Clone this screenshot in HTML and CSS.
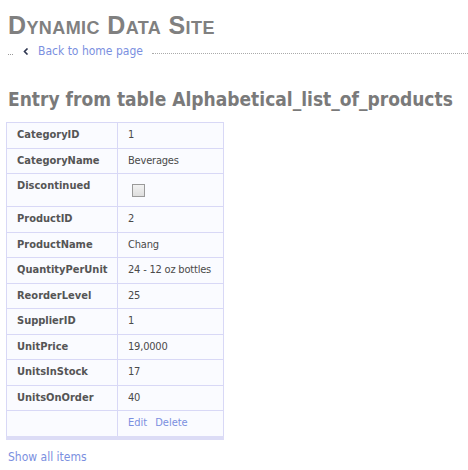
FILE: index.html
```html
<!DOCTYPE html>
<html>
<head>
<meta charset="utf-8">
<link rel="stylesheet" href="styles.css">
</head>
<body>
<div class="page">
  <div class="site-title">Dynamic Data Site</div>
  <div class="crumbs">
    <span class="dots-short"></span>
    <svg class="chev" width="6" height="7" viewBox="0 0 6 7"><path d="M4.5 0.5 L1.5 3.5 L4.5 6.5" fill="none" stroke="#2e3650" stroke-width="1.6"/></svg>
    <a class="link back" href="#">Back to home page</a>
    <span class="dots-long"></span>
  </div>
  <h2 class="entry-title">Entry from table Alphabetical_list_of_products</h2>
  <table class="detail">
    <colgroup><col class="c1"><col class="c2"></colgroup>
    <tr><th>CategoryID</th><td>1</td></tr>
    <tr><th>CategoryName</th><td>Beverages</td></tr>
    <tr><th>Discontinued</th><td><span class="check"></span></td></tr>
    <tr><th>ProductID</th><td>2</td></tr>
    <tr><th>ProductName</th><td>Chang</td></tr>
    <tr><th>QuantityPerUnit</th><td>24 - 12 oz bottles</td></tr>
    <tr><th>ReorderLevel</th><td>25</td></tr>
    <tr><th>SupplierID</th><td>1</td></tr>
    <tr><th>UnitPrice</th><td>19,0000</td></tr>
    <tr><th>UnitsInStock</th><td>17</td></tr>
    <tr><th>UnitsOnOrder</th><td>40</td></tr>
    <tr class="actions"><th></th><td><a class="link" href="#">Edit</a><a class="link del" href="#">Delete</a></td></tr>
  </table>
  <a class="link showall" href="#">Show all items</a>
</div>
</body>
</html>
```
FILE: styles.css
```css
html, body { margin: 0; padding: 0; background: #fff; }
body {
  font-family: "DejaVu Sans Condensed", "Liberation Sans", sans-serif;
  font-size: 11px;
  color: #444;
}
.page { padding: 0 0 0 8px; }
.site-title {
  font-family: "Liberation Sans", sans-serif;
  font-variant: small-caps;
  font-weight: bold;
  font-size: 25px;
  color: #808080;
  line-height: 28px;
  padding-top: 11px;
  letter-spacing: 0.4px;
}
.crumbs {
  display: flex;
  align-items: center;
  height: 18px;
  margin-top: 3px;
}
.dots-short {
  width: 5px;
  border-bottom: 1px dotted #999;
  margin-top: 6px;
}
.chev { margin-left: 10px; margin-right: 9px; }
.link { color: #7b8fe0; text-decoration: none; }
.back { font-size: 12px; }
.dots-long {
  flex: 1;
  border-bottom: 1px dotted #aaa;
  margin-left: 9px;
  margin-top: 4px;
}
.entry-title {
  font-family: "DejaVu Sans Condensed", "Liberation Sans", sans-serif;
  font-size: 19px;
  font-weight: bold;
  color: #7a7a7a;
  margin: 0;
  padding-top: 27px;
  line-height: 24px;
}
.detail {
  border-collapse: collapse;
  table-layout: fixed;
  width: 217px;
  margin: 11px 0 0 -2px;
  background: #fafbff;
  border: 1px solid #d8d8f6;
  border-bottom: 4px solid #dcdcf6;
}
.c1 { width: 111px; }
.c2 { width: 106px; }
.detail th, .detail td {
  border: 1px solid #d8d8f6;
  text-align: left;
  vertical-align: top;
  padding: 6px 0 6px 10px;
  line-height: 12.5px;
  height: 12.5px;
  white-space: nowrap;
  overflow: hidden;
}
.detail th { font-weight: bold; color: #555; }
.detail td { color: #4a4a4a; letter-spacing: -0.2px; }
.check {
  display: block;
  width: 11px;
  height: 11px;
  border: 1px solid #9a9a9a;
  background: linear-gradient(#f2f2f2, #dedede);
  margin: 4px 0 3px 4px;
}
.del { margin-left: 8px; }
.actions a { letter-spacing: 0; }
.showall { display: inline-block; margin-top: 10px; font-size: 12px; }
```
